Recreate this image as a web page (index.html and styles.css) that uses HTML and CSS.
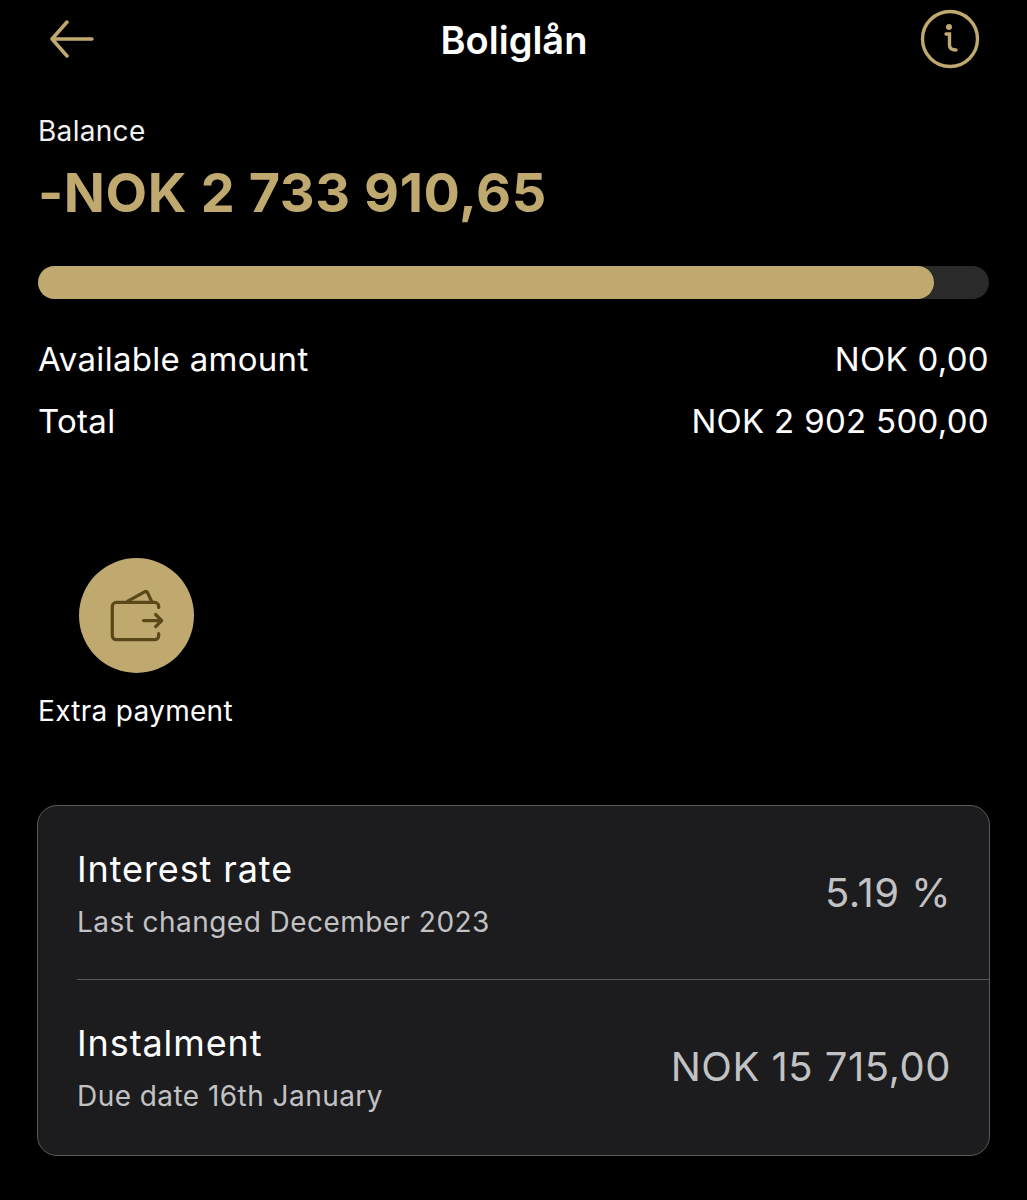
FILE: index.html
```html
<!DOCTYPE html>
<html lang="en">
<head>
    <meta charset="UTF-8">
    <meta name="viewport" content="width=device-width, initial-scale=1.0">
    <title>Boliglån</title>
    <link rel="stylesheet" href="styles.css">
</head>
<body>
    <div class="header">
        <svg class="back" width="44" height="38" viewBox="0 0 44 38" fill="none" stroke="#bfa96f" stroke-width="3.5" stroke-linecap="round" stroke-linejoin="round">
            <path d="M42 19H2M17 2L2 19L17 36"/>
        </svg>
        <h1>Boliglån</h1>
        <svg class="info" width="60" height="60" viewBox="0 0 60 60" fill="none" stroke="#bfa96f" stroke-width="3.4" stroke-linecap="round">
            <circle cx="30" cy="30" r="27.5"/>
            <path d="M26 25H29.5V36Q29.5 41 36 41"/>
            <circle cx="29" cy="18" r="3" fill="#bfa96f" stroke="none"/>
        </svg>
    </div>

    <div class="balance">
        <div class="balance-label">Balance</div>
        <div class="balance-value">-NOK 2 733 910,65</div>
    </div>

    <div class="bar"><div class="bar-fill" style="width: 94.2%"></div></div>

    <div class="rows">
        <div class="row"><span>Available amount</span><span>NOK 0,00</span></div>
        <div class="row"><span>Total</span><span>NOK 2 902 500,00</span></div>
    </div>

    <div class="action">
        <div class="action-circle">
            <svg width="115" height="115" viewBox="0 0 114 114" fill="none" stroke="#5a4819" stroke-width="3.2" stroke-linecap="round" stroke-linejoin="round">
                <path d="M79 49V48A4 4 0 0 0 75 44H37A4 4 0 0 0 33 48V77A4 4 0 0 0 37 81H75A4 4 0 0 0 79 77V75"/>
                <path d="M48 43L65 33.5Q67 32.5 68 34.5L72 43"/>
                <path d="M64 62H82M76 56L82 62L76 68"/>
            </svg>
        </div>
        <div class="action-label">Extra payment</div>
    </div>

    <div class="card">
        <div class="card-row">
            <div>
                <div class="card-title">Interest rate</div>
                <div class="card-sub">Last changed December 2023</div>
            </div>
            <div class="card-value">5.19 %</div>
        </div>
        <div class="card-line"></div>
        <div class="card-row">
            <div>
                <div class="card-title">Instalment</div>
                <div class="card-sub">Due date 16th January</div>
            </div>
            <div class="card-value">NOK 15 715,00</div>
        </div>
    </div>
</body>
</html>
```

FILE: styles.css
```css
body {
    margin: 0;
    padding: 0 38px 44px;
    background-color: #000;
    color: #fff;
    font-family: Inter, "Open Sans", sans-serif;
}

.header {
    display: flex;
    justify-content: space-between;
    align-items: center;
    height: 78px;
    padding: 0 9px 0 12px;
}

.header h1 {
    margin: 0;
    padding: 2px 0 0 14px;
    font-size: 38px;
    line-height: 80px;
    font-weight: 600;
    flex: 1;
    text-align: center;
}

.balance {
    margin-top: 36px;
}

.balance-label {
    font-size: 28px;
    line-height: 34px;
    letter-spacing: 0.3px;
    color: #f2f2f2;
}

.balance-value {
    margin-top: 12px;
    font-size: 54px;
    line-height: 66px;
    font-weight: 700;
    letter-spacing: 0.6px;
    color: #bfa96f;
}

.bar {
    margin-top: 40px;
    height: 33px;
    border-radius: 17px;
    background-color: #2a2a2a;
}

.bar-fill {
    height: 100%;
    border-radius: 17px;
    background-color: #bfa96f;
}

.rows {
    margin-top: 29px;
}

.row {
    display: flex;
    justify-content: space-between;
    font-size: 33px;
    line-height: 62px;
    height: 62px;
    letter-spacing: 0.3px;
}

.action {
    margin-top: 106px;
}

.action-circle {
    width: 115px;
    height: 115px;
    margin-left: 41px;
    border-radius: 50%;
    background-color: #bfa96f;
}

.action-circle svg {
    display: block;
}

.action-label {
    margin-top: 20px;
    font-size: 28px;
    line-height: 36px;
    letter-spacing: 0.3px;
}

.card {
    margin: 76px -1px 0;
    height: 351px;
    box-sizing: border-box;
    border: 1px solid #5a5a5c;
    border-radius: 20px;
    background-color: #1c1c1e;
    padding-left: 39px;
}

.card-row {
    display: flex;
    justify-content: space-between;
    align-items: center;
    height: 173px;
    padding-right: 38px;
}

.card-title {
    font-size: 36px;
    line-height: 44px;
    letter-spacing: 0.9px;
}

.card-sub {
    margin-top: 14px;
    font-size: 28px;
    line-height: 34px;
    letter-spacing: 0.45px;
    color: #c2c2c4;
}

.card-value {
    margin-top: -1px;
    font-size: 40px;
    letter-spacing: 0.5px;
    color: #c2c2c4;
}

.card-line {
    height: 1px;
    background-color: #58585a;
}
```
